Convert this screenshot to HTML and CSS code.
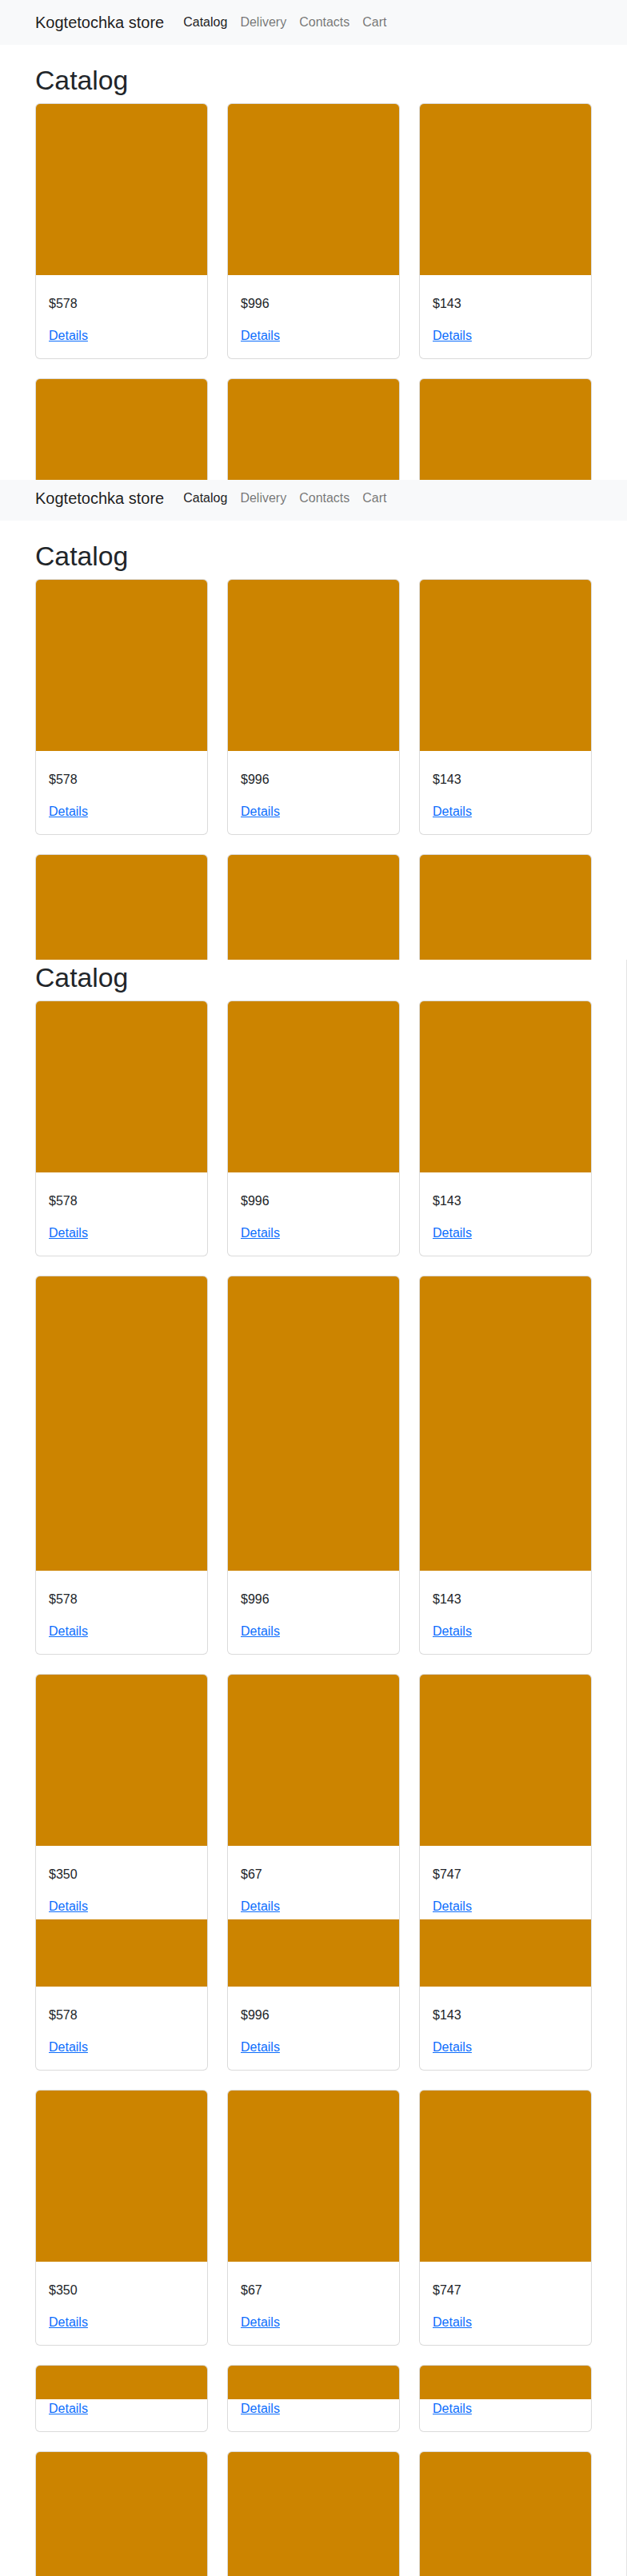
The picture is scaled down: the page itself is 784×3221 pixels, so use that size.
FILE: index.html
```html
<!DOCTYPE html>
<html lang="en">
<head>
<meta charset="utf-8">
<title>Kogtetochka store</title>
<link rel="stylesheet" href="styles.css">
</head>
<body>

<!-- View A -->
<section class="view view-a">
  <div class="page">
    <nav class="navbar">
      <div class="nav-inner">
        <a class="brand" href="#">Kogtetochka store</a>
        <a class="nav-link active" href="#">Catalog</a>
        <a class="nav-link" href="#">Delivery</a>
        <a class="nav-link" href="#">Contacts</a>
        <a class="nav-link" href="#">Cart</a>
      </div>
    </nav>
    <main class="container">
      <h1 class="title">Catalog</h1>
      <div class="row">
        <div class="card"><div class="card-img"></div><div class="card-body"><p class="price">$578</p><a class="details" href="#">Details</a></div></div>
        <div class="card"><div class="card-img"></div><div class="card-body"><p class="price">$996</p><a class="details" href="#">Details</a></div></div>
        <div class="card"><div class="card-img"></div><div class="card-body"><p class="price">$143</p><a class="details" href="#">Details</a></div></div>
      </div>
      <div class="row">
        <div class="card"><div class="card-img"></div></div>
        <div class="card"><div class="card-img"></div></div>
        <div class="card"><div class="card-img"></div></div>
      </div>
    </main>
  </div>
</section>

<!-- View B -->
<section class="view view-b">
  <div class="page">
    <nav class="navbar">
      <div class="nav-inner">
        <a class="brand" href="#">Kogtetochka store</a>
        <a class="nav-link active" href="#">Catalog</a>
        <a class="nav-link" href="#">Delivery</a>
        <a class="nav-link" href="#">Contacts</a>
        <a class="nav-link" href="#">Cart</a>
      </div>
    </nav>
    <main class="container">
      <h1 class="title">Catalog</h1>
      <div class="row">
        <div class="card"><div class="card-img"></div><div class="card-body"><p class="price">$578</p><a class="details" href="#">Details</a></div></div>
        <div class="card"><div class="card-img"></div><div class="card-body"><p class="price">$996</p><a class="details" href="#">Details</a></div></div>
        <div class="card"><div class="card-img"></div><div class="card-body"><p class="price">$143</p><a class="details" href="#">Details</a></div></div>
      </div>
      <div class="row">
        <div class="card"><div class="card-img"></div></div>
        <div class="card"><div class="card-img"></div></div>
        <div class="card"><div class="card-img"></div></div>
      </div>
    </main>
  </div>
</section>

<!-- View C -->
<section class="view view-c edge">
  <div class="page">
    <main class="container">
      <h1 class="title">Catalog</h1>
      <div class="row">
        <div class="card"><div class="card-img"></div><div class="card-body"><p class="price">$578</p><a class="details" href="#">Details</a></div></div>
        <div class="card"><div class="card-img"></div><div class="card-body"><p class="price">$996</p><a class="details" href="#">Details</a></div></div>
        <div class="card"><div class="card-img"></div><div class="card-body"><p class="price">$143</p><a class="details" href="#">Details</a></div></div>
      </div>
      <div class="row">
        <div class="card"><div class="card-img tall"></div><div class="card-body"><p class="price">$578</p><a class="details" href="#">Details</a></div></div>
        <div class="card"><div class="card-img tall"></div><div class="card-body"><p class="price">$996</p><a class="details" href="#">Details</a></div></div>
        <div class="card"><div class="card-img tall"></div><div class="card-body"><p class="price">$143</p><a class="details" href="#">Details</a></div></div>
      </div>
      <div class="row">
        <div class="card"><div class="card-img"></div><div class="card-body"><p class="price">$350</p><a class="details" href="#">Details</a></div></div>
        <div class="card"><div class="card-img"></div><div class="card-body"><p class="price">$67</p><a class="details" href="#">Details</a></div></div>
        <div class="card"><div class="card-img"></div><div class="card-body"><p class="price">$747</p><a class="details" href="#">Details</a></div></div>
      </div>
    </main>
  </div>
</section>

<!-- View D -->
<section class="view view-d edge">
  <div class="page">
    <main class="container">
      <div class="row">
        <div class="card"><div class="card-img"></div><div class="card-body"><p class="price">$578</p><a class="details" href="#">Details</a></div></div>
        <div class="card"><div class="card-img"></div><div class="card-body"><p class="price">$996</p><a class="details" href="#">Details</a></div></div>
        <div class="card"><div class="card-img"></div><div class="card-body"><p class="price">$143</p><a class="details" href="#">Details</a></div></div>
      </div>
      <div class="row">
        <div class="card"><div class="card-img"></div><div class="card-body"><p class="price">$350</p><a class="details" href="#">Details</a></div></div>
        <div class="card"><div class="card-img"></div><div class="card-body"><p class="price">$67</p><a class="details" href="#">Details</a></div></div>
        <div class="card"><div class="card-img"></div><div class="card-body"><p class="price">$747</p><a class="details" href="#">Details</a></div></div>
      </div>
      <div class="row">
        <div class="card"><div class="card-img"></div></div>
        <div class="card"><div class="card-img"></div></div>
        <div class="card"><div class="card-img"></div></div>
      </div>
    </main>
  </div>
</section>

<!-- View E -->
<section class="view view-e edge">
  <div class="page">
    <main class="container">
      <div class="row">
        <div class="card cut-top"><div class="card-body"><a class="details" href="#">Details</a></div></div>
        <div class="card cut-top"><div class="card-body"><a class="details" href="#">Details</a></div></div>
        <div class="card cut-top"><div class="card-body"><a class="details" href="#">Details</a></div></div>
      </div>
      <div class="row">
        <div class="card"><div class="card-img"></div></div>
        <div class="card"><div class="card-img"></div></div>
        <div class="card"><div class="card-img"></div></div>
      </div>
    </main>
  </div>
</section>

</body>
</html>
```

FILE: styles.css
```css
* {
  box-sizing: border-box;
}

html, body {
  margin: 0;
  padding: 0;
}

body {
  background: #fff;
  color: #212529;
  font-family: "Liberation Sans", Arial, sans-serif;
  font-size: 16px;
  line-height: 1.5;
}

/* spliced views of the scrolled page */
.view {
  overflow: hidden;
  background: #fff;
}
.view-a { height: 600px; }
.view-b { height: 600px; }
.view-c { height: 1200px; }
.view-d { height: 600px; }
.view-e { height: 221px; }

.view-b .page { margin-top: -5px; }
.view-d .page { margin-top: -131px; }

.edge {
  box-shadow: inset -1px 0 0 #e4e4e4;
}

/* navbar */
.navbar {
  background: #f8f9fa;
  padding: 8px 0;
}
.nav-inner {
  width: 720px;
  margin: 0 auto;
  padding: 0 12px;
  display: flex;
  align-items: center;
}
.brand {
  font-size: 20px;
  line-height: 30px;
  padding: 5px 0;
  margin-right: 16px;
  color: rgba(0, 0, 0, 0.9);
  text-decoration: none;
  white-space: nowrap;
}
.nav-link {
  padding: 8px;
  line-height: 24px;
  color: rgba(0, 0, 0, 0.55);
  text-decoration: none;
}
.nav-link.active {
  color: rgba(0, 0, 0, 0.9);
}

/* content */
.container {
  width: 720px;
  margin: 0 auto;
  padding: 24px 12px 0;
}
.view-c .container {
  padding-top: 2px;
}
.view-d .container,
.view-e .container {
  padding-top: 0;
}

.title {
  margin: 0 0 8px;
  font-size: 33.76px;
  font-weight: 500;
  line-height: 1.2;
  color: #212529;
}

.row {
  display: grid;
  grid-template-columns: repeat(3, 1fr);
  column-gap: 24px;
  margin-bottom: 24px;
}

.card {
  border: 1px solid rgba(0, 0, 0, 0.14);
  border-radius: 6px;
  overflow: hidden;
  background: #fff;
}
.card.cut-top {
  border-top: 0;
  border-radius: 0 0 6px 6px;
}
.card-img {
  height: 214px;
  background: #cc8400;
}
.card-img.tall {
  height: 368px;
}
.card-body {
  padding: 16px;
}
.cut-top .card-body {
  padding-top: 0;
}
.price {
  margin: 8px 0 16px;
  line-height: 24px;
}
.details {
  display: inline-block;
  line-height: 24px;
  color: #0d6efd;
  text-decoration: underline;
}
```
